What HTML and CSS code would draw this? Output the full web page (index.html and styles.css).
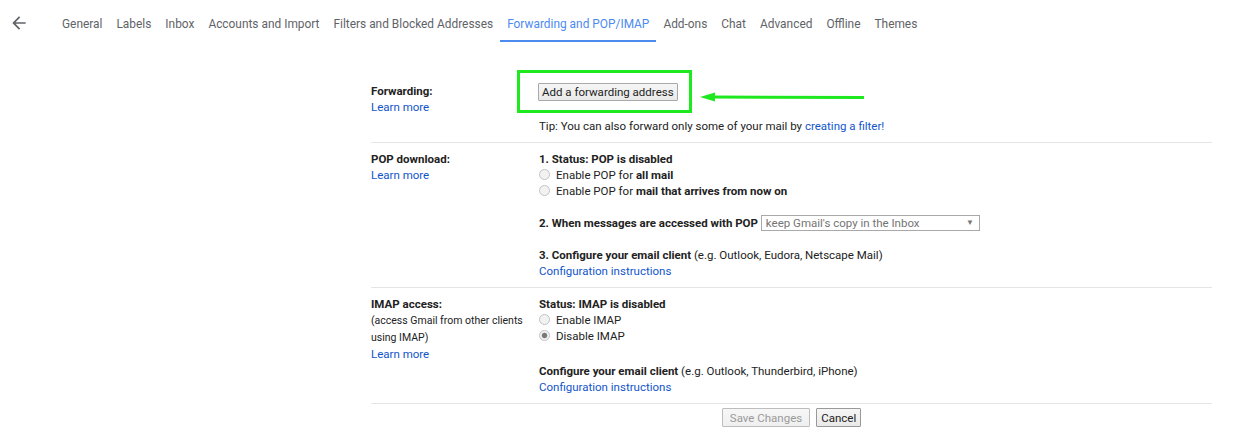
FILE: index.html
```html
<!DOCTYPE html>
<html lang="en">
<head>
<meta charset="utf-8">
<title>Settings - Forwarding and POP/IMAP</title>
<link rel="stylesheet" href="styles.css">
</head>
<body>
<header class="topbar">
  <button class="back" aria-label="Back">
    <svg width="20" height="20" viewBox="0 0 24 24"><path d="M20 11H7.83l5.59-5.59L12 4l-8 8 8 8 1.41-1.41L7.83 13H20v-2z" fill="#5f6368"/></svg>
  </button>
  <nav class="tabs">
    <a class="tab">General</a>
    <a class="tab">Labels</a>
    <a class="tab">Inbox</a>
    <a class="tab">Accounts and Import</a>
    <a class="tab">Filters and Blocked Addresses</a>
    <a class="tab active">Forwarding and POP/IMAP</a>
    <a class="tab">Add-ons</a>
    <a class="tab">Chat</a>
    <a class="tab">Advanced</a>
    <a class="tab">Offline</a>
    <a class="tab">Themes</a>
  </nav>
</header>

<main class="settings">
  <section class="row">
    <div class="label">
      <div class="title">Forwarding:</div>
      <a class="link">Learn more</a>
    </div>
    <div class="value">
      <div class="fwd-wrap">
        <button class="btn btn-fwd">Add a forwarding address</button>
        <span class="highlight"></span>
        <svg class="callout" width="166" height="12" viewBox="0 0 166 12">
          <line x1="12" y1="6" x2="164" y2="6.5" stroke="#1ee81e" stroke-width="3"/>
          <polygon points="0,6 15,1.5 15,10.5" fill="#1ee81e"/>
        </svg>
      </div>
      <div class="tip">Tip: You can also forward only some of your mail by <a class="link">creating a filter!</a></div>
    </div>
  </section>

  <section class="row">
    <div class="label">
      <div class="title">POP download:</div>
      <a class="link">Learn more</a>
    </div>
    <div class="value">
      <div class="title">1. Status: POP is disabled</div>
      <label class="opt"><input type="radio" name="pop">Enable POP for <b>all mail</b></label>
      <label class="opt"><input type="radio" name="pop">Enable POP for <b>mail that arrives from now on</b></label>
      <div class="gap"><b>2. When messages are accessed with POP</b> <span class="select">keep Gmail's copy in the Inbox<span class="caret">▼</span></span></div>
      <div class="gap"><b>3. Configure your email client</b> (e.g. Outlook, Eudora, Netscape Mail)</div>
      <a class="link">Configuration instructions</a>
    </div>
  </section>

  <section class="row">
    <div class="label">
      <div class="title">IMAP access:</div>
      <div class="note">(access Gmail from other clients using IMAP)</div>
      <a class="link">Learn more</a>
    </div>
    <div class="value">
      <div class="title">Status: IMAP is disabled</div>
      <label class="opt"><input type="radio" name="imap">Enable IMAP</label>
      <label class="opt"><input type="radio" name="imap" checked>Disable IMAP</label>
      <div class="gap-lg"><b>Configure your email client</b> (e.g. Outlook, Thunderbird, iPhone)</div>
      <a class="link">Configuration instructions</a>
    </div>
  </section>

  <div class="actions">
    <button class="btn btn-save" disabled>Save Changes</button>
    <button class="btn btn-cancel">Cancel</button>
  </div>
</main>
</body>
</html>
```

FILE: styles.css
```css
* { box-sizing: border-box; }

body {
  margin: 0;
  background: #fff;
  font-family: Roboto, "Liberation Sans", Arial, sans-serif;
  color: #222;
}

.topbar {
  display: flex;
  align-items: flex-start;
  height: 42px;
}

.back {
  margin: 13px 0 0 9px;
  padding: 0;
  width: 20px;
  height: 20px;
  border: 0;
  background: none;
  display: flex;
}

.tabs {
  display: flex;
  margin-left: 26px;
}

.tab {
  display: block;
  padding: 16px 7px 8px;
  font-size: 11.9px;
  line-height: 16px;
  color: #5f6368;
  border-bottom: 2px solid transparent;
  white-space: nowrap;
}

.tab.active {
  color: #4d8af0;
  border-bottom-color: #4d8af0;
}

.settings {
  margin: 33px 0 0 371px;
  width: 841px;
  font-size: 11.5px;
  line-height: 16px;
}

.row {
  display: grid;
  grid-template-columns: 168px 1fr;
  padding: 8px 0;
  border-bottom: 1px solid #e5e5e5;
}

.label, .value {
  display: flex;
  flex-direction: column;
  align-items: flex-start;
}

.title { font-weight: bold; }

.link {
  color: #15c;
  text-decoration: none;
}

.note {
  font-size: 10.5px;
  line-height: 17px;
}

.fwd-wrap {
  position: relative;
  height: 18px;
}

.highlight {
  position: absolute;
  left: -22px;
  top: -13px;
  width: 175px;
  height: 43px;
  border: 3px solid #1ee81e;
}

.callout {
  position: absolute;
  left: 161px;
  top: 8px;
}

.tip { margin-top: 17px; }

.btn {
  font-family: inherit;
  font-size: 11.5px;
  line-height: 16px;
  height: 18px;
  padding: 0 5px;
  margin: 0;
  color: #222;
  background: linear-gradient(#f6f6f6, #e9e9e9);
  border: 1px solid #a9a9a9;
  border-radius: 1px;
}

.btn-fwd {
  margin-left: -1px;
  padding: 0 3px;
}

.opt {
  display: block;
  height: 16px;
  white-space: nowrap;
}

.opt input {
  appearance: none;
  -webkit-appearance: none;
  display: inline-block;
  vertical-align: -1px;
  width: 11px;
  height: 11px;
  margin: 0 6px 0 0;
  border: 1px solid #c3c3c3;
  border-radius: 50%;
  background: #f2f2f2;
}

.opt input:checked {
  background: radial-gradient(circle, #777 2px, #9a9a9a 2.6px, #f2f2f2 3.2px);
}

.gap { margin-top: 16px; white-space: nowrap; }

.gap-lg { margin-top: 19px; }

.select {
  display: inline-flex;
  vertical-align: top;
  align-items: center;
  justify-content: space-between;
  width: 219px;
  height: 16px;
  padding: 0 5px 0 4px;
  border: 1px solid #a9a9a9;
  color: #757575;
  font-weight: normal;
  line-height: 14px;
}

.caret {
  font-size: 8px;
  color: #777;
}

.actions {
  display: flex;
  justify-content: center;
  gap: 6px;
  margin-top: 4px;
}

.actions .btn { height: 19px; padding: 0 4px; }

.actions .btn-save {
  padding: 0 7px;
  color: #9a9a9a;
  border-color: #bdbdbd;
  background: linear-gradient(#f7f7f7, #efefef);
}

.btn-cancel { border-color: #999; }
```
